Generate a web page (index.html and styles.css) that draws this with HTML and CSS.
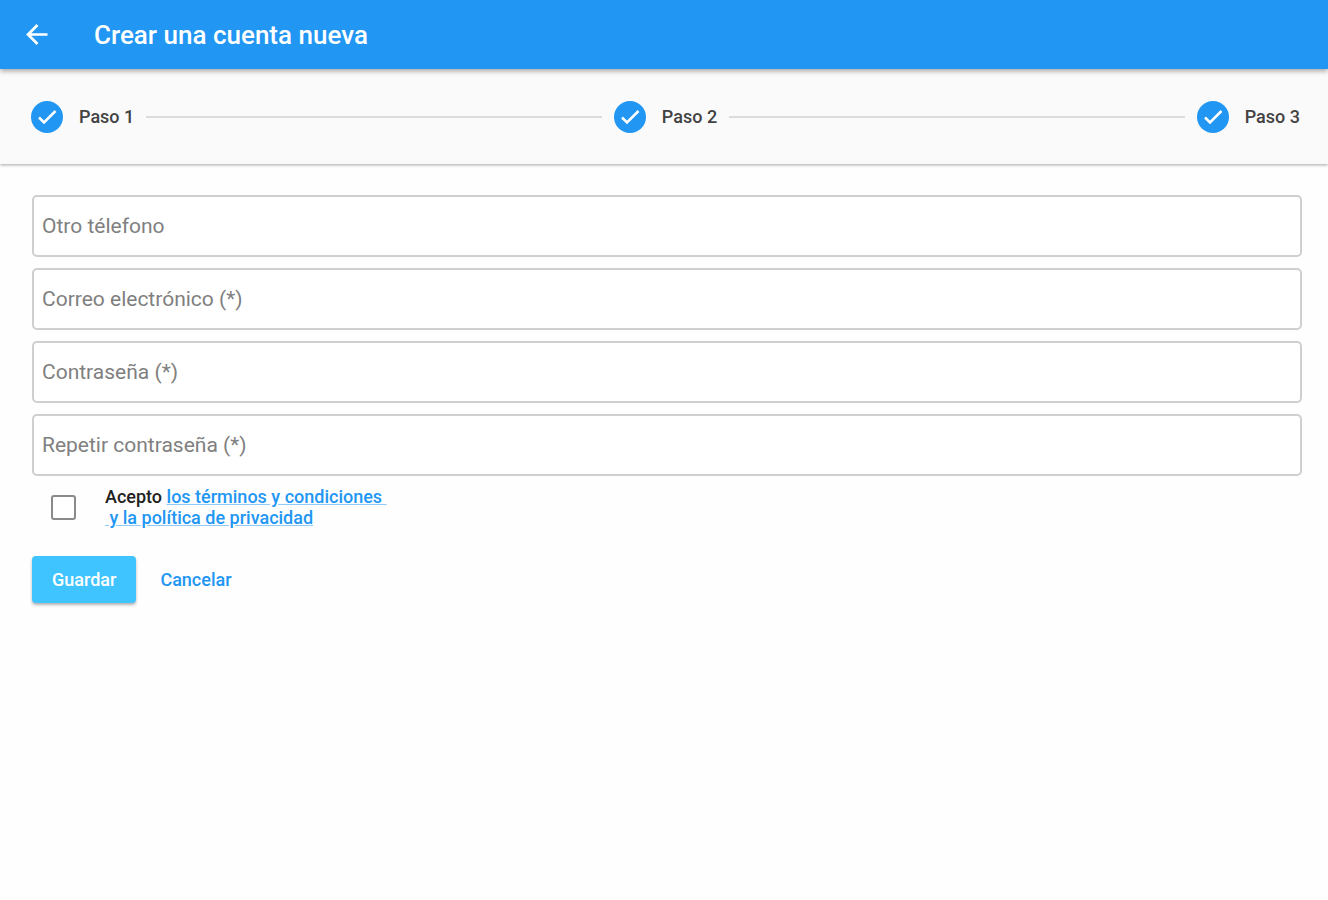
FILE: index.html
```html
<!DOCTYPE html>
<html lang="es">
<head>
  <meta charset="UTF-8" />
  <meta name="viewport" content="width=device-width, initial-scale=1.0" />
  <title>Crear una cuenta nueva</title>
  <link rel="stylesheet" href="styles.css">
</head>
<body>
  <header class="app-bar">
    <a href="#" class="back" aria-label="Volver">
      <svg width="22" height="22" viewBox="0 0 22 22" fill="none" stroke="currentColor" stroke-width="2.7">
        <path d="M21.5 10.5H2.5M11.5 1L2 10.5l9.5 9.5" />
      </svg>
    </a>
    <h1>Crear una cuenta nueva</h1>
  </header>

  <ol class="stepper">
    <li class="step">
      <svg class="check" viewBox="0 0 32 32">
        <circle cx="16" cy="16" r="16" />
        <path d="M8 16.5l5 5L24.5 10" />
      </svg>
      <span>Paso 1</span>
    </li>
    <li class="line"></li>
    <li class="step">
      <svg class="check" viewBox="0 0 32 32">
        <circle cx="16" cy="16" r="16" />
        <path d="M8 16.5l5 5L24.5 10" />
      </svg>
      <span>Paso 2</span>
    </li>
    <li class="line"></li>
    <li class="step">
      <svg class="check" viewBox="0 0 32 32">
        <circle cx="16" cy="16" r="16" />
        <path d="M8 16.5l5 5L24.5 10" />
      </svg>
      <span>Paso 3</span>
    </li>
  </ol>

  <form class="account-form" novalidate>
    <input class="field" type="tel" name="phone" placeholder="Otro télefono" aria-label="Otro télefono" />
    <input class="field" type="email" name="email" placeholder="Correo electrónico (*)" aria-label="Correo electrónico (*)" />
    <input class="field" type="password" name="password" placeholder="Contraseña (*)" aria-label="Contraseña (*)" />
    <input class="field" type="password" name="repeat" placeholder="Repetir contraseña (*)" aria-label="Repetir contraseña (*)" />

    <div class="terms">
      <input type="checkbox" id="terms" name="terms" />
      <label for="terms">Acepto <a href="#">los términos y condiciones&nbsp;<br>&nbsp;y la política de privacidad</a></label>
    </div>

    <div class="actions">
      <button type="submit" class="save">Guardar</button>
      <button type="button" class="cancel">Cancelar</button>
    </div>
  </form>
</body>
</html>
```

FILE: styles.css
```css
* {
  box-sizing: border-box;
}

body {
  margin: 0;
  background-color: #fefefe;
  font-family: Roboto, sans-serif;
  font-size: 18px;
  color: #212121;
}

.app-bar {
  position: relative;
  display: flex;
  align-items: center;
  gap: 46px;
  height: 69px;
  padding: 0 26px;
  background-color: #2196f3;
  color: #fff;
  box-shadow: 0 2px 5px rgba(0, 0, 0, 0.35);
}

.app-bar h1 {
  margin: 0;
  font-size: 26px;
  font-weight: 500;
}

.back {
  display: flex;
  color: inherit;
}

.stepper {
  display: flex;
  align-items: center;
  gap: 12px;
  height: 95px;
  margin: 0;
  padding: 0 28px 0 31px;
  list-style: none;
  background-color: #fafafa;
  box-shadow: 0 1px 3px rgba(0, 0, 0, 0.35);
}

.step {
  display: flex;
  align-items: center;
  gap: 16px;
  font-weight: 500;
  color: #424242;
}

.check {
  width: 32px;
  height: 32px;
}

.check circle {
  fill: #2196f3;
}

.check path {
  fill: none;
  stroke: #fff;
  stroke-width: 2.5;
}

.line {
  flex: 1;
  height: 2px;
  background-color: #dcdcdc;
}

.account-form {
  padding: 31px 26px 31px 32px;
}

.field {
  display: block;
  width: 100%;
  height: 62px;
  margin-bottom: 11px;
  padding: 0 8px;
  border: 2px solid #cfcfcf;
  border-radius: 5px;
  background-color: #fff;
  font: inherit;
  font-size: 21px;
}

.field::placeholder {
  color: #808080;
  opacity: 1;
}

.terms {
  display: flex;
  align-items: center;
  gap: 29px;
  margin-top: -1px;
  padding-left: 19px;
  line-height: 21px;
}

.terms input {
  appearance: none;
  width: 25px;
  height: 25px;
  margin: 0;
  border: 2px solid #8a8a8a;
  border-radius: 3px;
  background-color: #fff;
}

.terms input:checked {
  background-color: #2196f3;
}

.terms label {
  font-weight: 500;
}

.terms a {
  color: #2196f3;
  text-decoration-color: #90caf9;
}

.actions {
  display: flex;
  gap: 4px;
  margin-top: 28px;
}

.actions button {
  height: 47px;
  padding: 0 20px;
  border: none;
  border-radius: 4px;
  font: inherit;
  font-weight: 500;
  cursor: pointer;
}

.save {
  background-color: #40c4ff;
  color: #fff;
  box-shadow: 0 2px 3px rgba(0, 0, 0, 0.3);
}

.cancel {
  background: none;
  color: #2196f3;
}
```
